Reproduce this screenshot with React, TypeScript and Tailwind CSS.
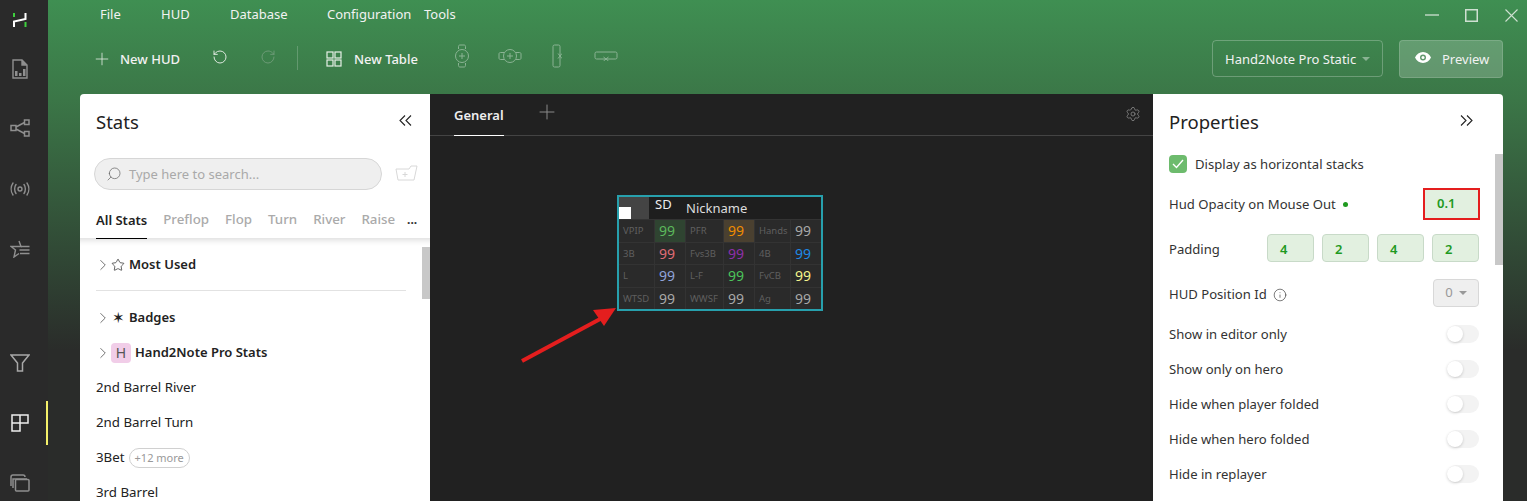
import { ChevronRight, Info, Plus, RotateCcw, RotateCw, Search, Settings, Star } from "lucide-react"

const menus = [
    { label: "File", className: "w-[61px]" },
    { label: "HUD", className: "w-[69px]" },
    { label: "Database", className: "w-[97px]" },
    { label: "Configuration", className: "w-[97px]" },
    { label: "Tools", className: "w-[60px]" },
]

const hudRows = [
    [["VPIP", "99", "text-[#5cb85c] bg-[#2f4431]"], ["PFR", "99", "text-[#f08c00] bg-[#4a4030]"], ["Hands", "99", "text-[#a8a8a8]"]],
    [["3B", "99", "text-[#e06c75]"], ["Fvs3B", "99", "text-[#8e2fa8]"], ["4B", "99", "text-[#1e88e5]"]],
    [["L", "99", "text-[#8fa3d9]"], ["L-F", "99", "text-[#4cc35a]"], ["FvCB", "99", "text-[#f4f48c]"]],
    [["WTSD", "99", "text-[#a8a8a8]"], ["WWSF", "99", "text-[#a8a8a8]"], ["Ag", "99", "text-[#a8a8a8]"]],
]

const toggles = ["Show in editor only", "Show only on hero", "Hide when player folded", "Hide when hero folded", "Hide in replayer"]

const Logo = () => (
    <svg width="14" height="14" viewBox="0 0 14 14" fill="none">
        <path d="M1 0V4" stroke="#3ecf3e" strokeWidth="2" />
        <path d="M1 14V8.500L12.500 6V0" stroke="#fff" strokeWidth="2" />
        <path d="M12.500 9V14" stroke="#3ecf3e" strokeWidth="2" />
    </svg>
)

const ReportIcon = () => (
    <svg width="16" height="20" viewBox="0 0 16 20" fill="none" stroke="#8f8f8f" strokeWidth="1.4">
        <path d="M1 1H10L15 6V19H1Z" />
        <path d="M3 17V12H5.500V17ZM7 17V14H9.500V17ZM11 17V10H13.500V17Z" fill="#8f8f8f" stroke="none" />
        <path d="M10 1V6H15" fill="#8f8f8f" />
    </svg>
)

const NodesIcon = () => (
    <svg width="20" height="18" viewBox="0 0 20 18" fill="none" stroke="#8f8f8f" strokeWidth="1.5">
        <rect x="1" y="6.500" width="5" height="5" />
        <rect x="14.500" y="1" width="4.500" height="4.500" />
        <rect x="14.500" y="12.500" width="4.500" height="4.500" />
        <path d="M6 8L14.500 3.500M6 10L14.500 14.500" />
    </svg>
)

const BroadcastIcon = () => (
    <svg width="20" height="14" viewBox="0 0 20 14" fill="none" stroke="#8f8f8f" strokeWidth="1.4" strokeLinecap="round">
        <circle cx="10" cy="7" r="2" />
        <path d="M6 2.500C4.200 5 4.200 9 6 11.500M14 2.500C15.800 5 15.800 9 14 11.500M3 1C.6 4.500.6 9.500 3 13M17 1C19.400 4.500 19.400 9.500 17 13" />
    </svg>
)

const StarListIcon = () => (
    <svg width="20" height="18" viewBox="0 0 20 18" fill="none" stroke="#8f8f8f" strokeWidth="1.4">
        <path d="M9 1L11 6.500H1L5.500 10L4 17L9 13.500" />
        <path d="M11 6.500H19.500M9.500 10H19.500M10 13.500H19.500" />
    </svg>
)

const FilterIcon = () => (
    <svg width="20" height="18" viewBox="0 0 20 18" fill="none" stroke="#a8a8a8" strokeWidth="1.5">
        <path d="M1 1H19L12.500 9V17H7.500V9Z" />
    </svg>
)

const HudIcon = () => (
    <svg width="18" height="18" viewBox="0 0 18 18" fill="none" stroke="#ededed" strokeWidth="1.5">
        <path d="M1 1H9V9H1ZM9 1H17V9H9ZM1 9H9V17H1Z" />
    </svg>
)

const WindowsIcon = () => (
    <svg width="20" height="18" viewBox="0 0 20 18" fill="none" stroke="#8f8f8f" strokeWidth="1.5">
        <path d="M1 12V3C1 2 2 1 3 1H13C14 1 15 2 15 3" />
        <path d="M3 14V5H17" />
        <rect x="5.500" y="5.500" width="13.500" height="11.500" rx="1" />
    </svg>
)

const TableGridIcon = () => (
    <svg width="16" height="16" viewBox="0 0 16 16" fill="none" stroke="#e8f0e8" strokeWidth="1.2">
        <rect x="1" y="1" width="6" height="6" />
        <rect x="9" y="1" width="6" height="6" />
        <rect x="1" y="9" width="6" height="6" />
        <rect x="9" y="9" width="6" height="6" />
    </svg>
)

const EyeFilled = () => (
    <svg width="16" height="11" viewBox="0 0 16 11" className="mr-[11px] mb-[3px]">
        <path fillRule="evenodd" fill="#fff" d="M8 0C4.500 0 1.500 2.200 0 5.500 1.500 8.800 4.500 11 8 11S14.500 8.800 16 5.500C14.500 2.200 11.500 0 8 0ZM8 2.500A3 3 0 1 1 8 8.500 3 3 0 0 1 8 2.500Z" />
        <circle cx="8" cy="5.500" r="1.500" fill="#fff" />
    </svg>
)

const SeatIcons = () => (
    <div className="flex items-center ml-[37px] mb-[6px] opacity-40 text-white">
        <svg width="14" height="24" viewBox="0 0 14 24" fill="none" stroke="currentColor" className="mr-[29px]">
            <path d="M3.500 5V2.500C3.500 1.500 4 1 5 1H9C10 1 10.500 1.500 10.500 2.500V5M3.500 19V21.500C3.500 22.500 4 23 5 23H9C10 23 10.500 22.500 10.500 21.500V19" />
            <circle cx="7" cy="12" r="6.500" />
            <path d="M7 9V15M4 12H10" />
        </svg>
        <svg width="24" height="14" viewBox="0 0 24 14" fill="none" stroke="currentColor" className="mr-[30px]">
            <path d="M6 3.500H2.500C1.500 3.500 1 4 1 5V9C1 10 1.500 10.500 2.500 10.500H6M18 3.500H21.500C22.500 3.500 23 4 23 5V9C23 10 22.500 10.500 21.500 10.500H18" />
            <circle cx="12" cy="7" r="6.500" />
            <path d="M12 4V10M9 7H15" />
        </svg>
        <svg width="10" height="24" viewBox="0 0 10 24" fill="none" stroke="currentColor" className="mr-[32px]">
            <rect x="1" y="1" width="7" height="22" rx="1.500" />
            <path d="M6 9.500L10 14.500M10 9.500L6 14.500" />
        </svg>
        <svg width="24" height="10" viewBox="0 0 24 10" fill="none" stroke="currentColor">
            <rect x="1" y="1" width="22" height="7" rx="1.500" />
            <path d="M9.500 6L14.500 10M14.500 6L9.500 10" />
        </svg>
    </div>
)

const GroupRow = ({ icon, label }: { icon: React.ReactNode; label: string }) => (
    <div className="flex items-center h-[35px]">
        <ChevronRight size={18} strokeWidth={1} className="text-[#444] -ml-[2px] mr-[-1px]" />
        {icon}
        <span className="pt-px text-[13px] font-semibold text-[#222]">{label}</span>
    </div>
)

const Toggle = () => (
    <div className="relative w-[32px] h-[18px] rounded-full bg-[#f3f3f3]">
        <div className="absolute left-0 top-[1px] w-[16px] h-[16px] rounded-full bg-white shadow-[0_1px_3px_rgba(0,0,0,0.18)]" />
    </div>
)

const NumberBox = ({ value }: { value: string }) => (
    <div className="flex items-center w-[47px] h-[28px] pl-3 pt-[3px] rounded bg-[#e2f0e0] border border-[#c8dac8] text-[13px] font-semibold text-[#1f9a1f]">
        {value}
    </div>
)

const HudWidget = () => (
    <div className="absolute left-[187px] top-[101px] w-[206px] border-2 border-[#27a0ad] bg-[#333]">
        <div className="flex gap-px h-[22px] bg-[#1e1e1e]">
            <div className="relative w-[30px] bg-[#444]">
                <div className="absolute left-0 bottom-0 w-[12px] h-[12px] bg-white" />
            </div>
            <div className="w-[35px] pl-[5px] text-[13px] leading-[14px] text-[#eee]">SD</div>
            <div className="flex-1 text-[13px] leading-[23px] text-[#ddd]">Nickname</div>
        </div>
        <div className="grid grid-cols-[35px_30px_37px_30px_35px_30px] gap-px pt-px">
            {hudRows.flat().map(([label, value, color], i) => (
                <div key={i} className="contents">
                    <div className="h-[21.5px] pl-[4px] bg-[#2a2a2a] text-[9.5px] leading-[22px] text-[#5f5f5f]">{label}</div>
                    <div className={`h-[21.5px] pl-[4px] text-[14px] leading-[21px] ${color.includes("bg-") ? color : `bg-[#2a2a2a] ${color}`}`}>{value}</div>
                </div>
            ))}
        </div>
    </div>
)

const App = () => {
    return (
        <div className="relative flex w-[1527px] h-[501px] overflow-hidden bg-[#2a2a2a] font-['Noto_Sans',sans-serif]">
            <aside className="relative flex flex-col items-center w-12 shrink-0 bg-[#2a2a2a]">
                <div className="flex items-center justify-center h-[20px] w-full mt-[10px] pr-2"><Logo /></div>
                <div className="flex items-center justify-center h-[20px] w-full mt-[29px] pr-2"><ReportIcon /></div>
                <div className="flex items-center justify-center h-[20px] w-full mt-[39px] pr-2"><NodesIcon /></div>
                <div className="flex items-center justify-center h-[20px] w-full mt-[41px] pr-2"><BroadcastIcon /></div>
                <div className="flex items-center justify-center h-[20px] w-full mt-[40px] pr-2"><StarListIcon /></div>
                <div className="flex items-center justify-center h-[20px] w-full mt-[94px] pr-2"><FilterIcon /></div>
                <div className="flex items-center justify-center h-[20px] w-full mt-[40px] pr-2"><HudIcon /></div>
                <div className="flex items-center justify-center h-[20px] w-full mt-[40px] pr-2"><WindowsIcon /></div>
                <div className="absolute right-0 top-[401px] w-[2px] h-[44px] bg-[#f4f06a]" />
            </aside>

            <main className="flex-1 flex flex-col min-w-0 bg-[linear-gradient(180deg,#3f8f52_0px,#3b7647_100px,#2a2c2a_350px)]">
                <div className="flex items-center h-[30px] shrink-0 pl-[52px] text-[13px] text-[#f2f2f2]">
                    {menus.map((m) => (
                        <span key={m.label} className={m.className}>{m.label}</span>
                    ))}
                    <div className="flex items-center ml-auto mr-[9px] text-[#cfe0d2]">
                        <svg width="14" height="14" viewBox="0 0 14 14" stroke="currentColor" strokeWidth="1.3" className="mr-[26px]"><path d="M0 7H14" /></svg>
                        <svg width="13" height="13" viewBox="0 0 13 13" fill="none" stroke="currentColor" strokeWidth="1.5" className="mr-[27px]"><rect x=".75" y=".75" width="11.500" height="11.500" /></svg>
                        <svg width="13" height="13" viewBox="0 0 13 13" stroke="currentColor" strokeWidth="1.1"><path d="M.5 .5L12.500 12.500M12.500 .5L.5 12.500" /></svg>
                    </div>
                </div>

                <div className="flex items-center h-[47px] shrink-0 mt-[5px] pl-[44px] pr-6 text-[13px] font-medium text-[#f2f2f2]">
                    <Plus size={20} strokeWidth={1} className="mr-[8px] text-[#dfe8e0]" />
                    <span className="pt-[3px]">New HUD</span>
                    <RotateCcw size={16} strokeWidth={1.4} className="ml-[32px] mb-[3px] text-[#e8efe8]" />
                    <RotateCw size={16} strokeWidth={1.4} className="ml-[32px] mb-[3px] text-[#6f9c78]" />
                    <div className="w-px h-[24px] ml-[21px] mb-[1px] bg-white/20" />
                    <div className="ml-[28px] mr-[12px]"><TableGridIcon /></div>
                    <span className="pt-[3px]">New Table</span>
                    <SeatIcons />
                    <div className="flex items-center ml-auto w-[171px] h-[37px] pl-3 rounded border border-white/25 font-normal">
                        <span className="pt-[2px]">Hand2Note Pro Static</span>
                        <span className="ml-[6px] w-0 h-0 border-x-[4px] border-x-transparent border-t-[4px] border-t-white/40" />
                    </div>
                    <div className="flex items-center w-[104px] h-[38px] ml-4 pl-[15px] rounded bg-white/20 border border-white/15 font-normal">
                        <EyeFilled />
                        <span className="pt-[2px]">Preview</span>
                    </div>
                </div>

                <div className="flex flex-1 min-h-0 mt-[12px] ml-8 mr-6 rounded-t overflow-hidden">
                    <section className="flex flex-col w-[350px] shrink-0 bg-white">
                        <div className="flex items-center justify-between h-[56px] shrink-0 pl-4 pr-[18px]">
                            <span className="text-[18.5px] text-[#222]">Stats</span>
                            <svg width="13" height="11" viewBox="0 0 13 11" fill="none" stroke="#222" strokeWidth="1.1" className="mb-1"><path d="M6 .5L1 5.500L6 10.500M12 .5L7 5.500L12 10.500" /></svg>
                        </div>
                        <div className="flex items-center shrink-0 pl-[14px] mt-2">
                            <div className="flex items-center w-[288px] h-[32px] pl-[11px] rounded-full bg-[#efefef] border border-[#d6d6d6] text-[13px] text-[#a9a9a9]">
                                <Search size={16} strokeWidth={1.1} className="-scale-x-100 mr-[7px] text-[#666]" />
                                <span className="pt-[2px]">Type here to search...</span>
                            </div>
                            <svg width="23" height="16" viewBox="0 0 23 16" fill="none" stroke="#d8d8d8" className="ml-[13px] mb-[2px]">
                                <path d="M1 4H14L16 1H22L19 15H3Z" />
                                <path d="M10 7V12M7.500 9.500H12.500" />
                            </svg>
                        </div>
                        <div className="flex items-center gap-4 h-[37px] shrink-0 mt-[11px] pl-4 pt-px text-[13.3px] font-medium text-[#aaa]">
                            <span className="relative -mt-px text-[13px] font-semibold text-[#222] leading-[38px]">
                                All Stats
                                <span className="absolute left-0 right-0 bottom-0 h-[1px] bg-black" />
                            </span>
                            <span>Preflop</span>
                            <span>Flop</span>
                            <span>Turn</span>
                            <span>River</span>
                            <span>Raise</span>
                            <span className="-ml-1 text-[12px] text-[#333] font-bold">...</span>
                        </div>
                        <div className="relative flex-1 pl-4 shadow-[inset_0_8px_6px_-6px_rgba(0,0,0,0.15)] pt-[9px] text-[13.3px] text-[#222]">
                            <div className="absolute right-0 top-[9px] w-2 h-[52px] bg-[#c8c8c8]" />
                            <GroupRow icon={<Star size={14} strokeWidth={1.2} className="text-[#222] mr-[4px]" />} label="Most Used" />
                            <div className="w-[310px] h-px mt-[8px] mb-[9px] bg-[#e2e2e2]" />
                            <GroupRow icon={<span className="w-[14px] mr-[4px] text-center text-[15px] leading-none text-[#222]">✶</span>} label="Badges" />
                            <GroupRow icon={<span className="flex items-center justify-center shrink-0 w-[20px] h-[20px] mr-[4px] rounded-sm bg-[#f1cde8] text-[14px] text-[#555]">H</span>} label="Hand2Note Pro Stats" />
                            <div className="flex items-center h-[35px]">2nd Barrel River</div>
                            <div className="flex items-center h-[35px]">2nd Barrel Turn</div>
                            <div className="flex items-center h-[35px]">
                                3Bet
                                <span className="ml-1 px-[5px] h-[20px] rounded-full border border-[#d0d0d0] text-[11px] leading-[18px] text-[#999]">+12 more</span>
                            </div>
                            <div className="flex items-center h-[35px]">3rd Barrel</div>
                        </div>
                    </section>

                    <section className="relative flex-1 min-w-0 bg-[#212121]">
                        <div className="relative flex items-center h-[42px] border-b border-[#444]">
                            <span className="relative ml-6 text-[13px] font-semibold leading-[42px] text-[#eee]">
                                General
                                <span className="absolute left-0 right-0 bottom-0 h-px bg-white" />
                            </span>
                            <Plus size={24} strokeWidth={1} className="ml-[31px] mb-[5px] text-[#8a8a8a]" />
                            <Settings size={16} strokeWidth={1.2} className="ml-auto mr-3 mb-[2px] text-[#8a8a8a]" />
                        </div>
                        <HudWidget />
                        <svg width="100" height="60" viewBox="0 0 100 60" className="absolute left-[88px] top-[212px]">
                            <path d="M4 55L84 12" stroke="#e41e1e" strokeWidth="4" />
                            <path d="M98 2L75 4L86 20Z" fill="#e41e1e" />
                        </svg>
                    </section>

                    <section className="relative flex flex-col w-[350px] shrink-0 bg-white pl-4 pr-6 text-[13.1px] text-[#333]">
                        <div className="absolute right-0 top-[60px] w-2 h-[111px] bg-[#c8c8c8]" />
                        <div className="flex items-center justify-between h-[56px] shrink-0 pr-[6px]">
                            <span className="text-[18.5px] text-[#222]">Properties</span>
                            <svg width="13" height="11" viewBox="0 0 13 11" fill="none" stroke="#222" strokeWidth="1.1" className="mb-1"><path d="M1 .5L6 5.500L1 10.500M7 .5L12 5.500L7 10.500" /></svg>
                        </div>
                        <div className="flex items-center h-[18px] mt-[5px]">
                            <span className="flex items-center justify-center w-[18px] h-[18px] mr-2 rounded-sm bg-[#6dbb6d]">
                                <svg width="12" height="10" viewBox="0 0 12 10" fill="none" stroke="#fff" strokeWidth="1.4"><path d="M1 5L4.500 8.500L11 1" /></svg>
                            </span>
                            <span className="pt-px">Display as horizontal stacks</span>
                        </div>
                        <div className="flex items-center justify-between h-[32px] mt-[15px]">
                            <span className="flex items-center pt-px">
                                Hud Opacity on Mouse Out
                                <span className="ml-[7px] w-[5px] h-[5px] rounded-full bg-[#1f9a1f]" />
                            </span>
                            <div className="flex items-center w-[57px] h-[32px] -mr-px pl-3 bg-[#e2f0e0] border-2 border-[#e41e1e] text-[13px] font-semibold text-[#1f9a1f]">0.1</div>
                        </div>
                        <div className="flex items-center justify-between h-[28px] mt-[14px]">
                            <span className="pt-[4px]">Padding</span>
                            <div className="flex gap-2">
                                <NumberBox value="4" />
                                <NumberBox value="2" />
                                <NumberBox value="4" />
                                <NumberBox value="2" />
                            </div>
                        </div>
                        <div className="flex items-center justify-between h-[28px] mt-[17px]">
                            <span className="flex items-center pt-[4px]">
                                HUD Position Id
                                <Info size={14} strokeWidth={1.1} className="ml-[6px]" />
                            </span>
                            <div className="flex items-center justify-center gap-[6px] w-[46px] h-[28px] rounded bg-[#efefef] border border-[#d8d8d8] text-[#999]">
                                0
                                <span className="w-0 h-0 border-x-[4px] border-x-transparent border-t-[4px] border-t-[#999]" />
                            </div>
                        </div>
                        <div className="mt-[9px]">
                            {toggles.map((t) => (
                                <div key={t} className="flex items-center justify-between h-[35px]">
                                    <span className="pt-[3px]">{t}</span>
                                    <Toggle />
                                </div>
                            ))}
                        </div>
                    </section>
                </div>
            </main>
        </div>
    )
}

export default App
